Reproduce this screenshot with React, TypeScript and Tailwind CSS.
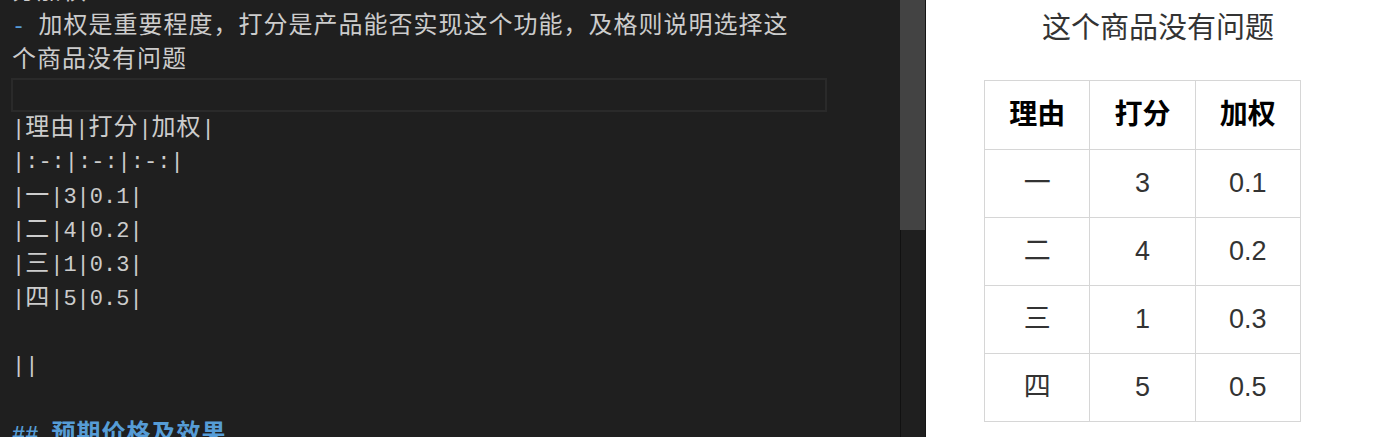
import React from "react";

const CJK = /([\u3000-\u9fff\uff00-\uffef]+)/;

function Seg({ text }: { text: string }) {
  return (
    <>
      {text.split(CJK).map((part, i) =>
        CJK.test(part) ? (
          <span key={i} className="text-[24px] leading-[34px] tracking-[1px]">
            {part}
          </span>
        ) : (
          <React.Fragment key={i}>{part}</React.Fragment>
        )
      )}
    </>
  );
}

function Line({ children, current }: { children?: React.ReactNode; current?: boolean }) {
  if (current) {
    return <div className="h-[34px] border-2 border-[#2a2a2a]" />;
  }
  return <div className="h-[34px] pl-[1px] leading-[34px] whitespace-pre overflow-hidden">{children}</div>;
}

const tableLines = ["|理由|打分|加权|", "|:-:|:-:|:-:|", "|一|3|0.1|", "|二|4|0.2|", "|三|1|0.3|", "|四|5|0.5|", "", "||", ""];

const rows = [
  ["一", "3", "0.1"],
  ["二", "4", "0.2"],
  ["三", "1", "0.3"],
  ["四", "5", "0.5"],
];

export default function App() {
  return (
    <div className="flex h-[437px] w-[1395px] overflow-hidden bg-white">
      {/* editor */}
      <div className="w-[900px] shrink-0 overflow-hidden bg-[#1f1f1f] text-[22px] text-[#cccccc] font-['Liberation_Mono','Noto_Sans_CJK_SC',monospace]">
        <div className="-mt-[24px] ml-[11px] w-[816px]">
          <Line>
            <Seg text="分加权" />
          </Line>
          <Line>
            <span className="text-[#569cd6]">-</span> <Seg text="加权是重要程度，打分是产品能否实现这个功能，及格则说明选择这" />
          </Line>
          <Line>
            <Seg text="个商品没有问题" />
          </Line>
          <Line current />
          {tableLines.map((l, i) => (
            <Line key={i}>
              <Seg text={l} />
            </Line>
          ))}
          <Line>
            <span className="font-bold text-[#569cd6]">
              ## <Seg text="预期价格及效果" />
            </span>
          </Line>
        </div>
      </div>

      {/* scrollbar */}
      <div className="flex w-[26px] shrink-0 flex-col border-r border-[#151515] bg-[#1f1f1f]">
        <div className="h-[230px] bg-[#434343]" />
        <div className="flex-1 border-l border-[#111111]" />
      </div>

      {/* preview */}
      <div className="flex-1 bg-white font-['Liberation_Sans','Noto_Sans_CJK_SC',sans-serif] text-[#333333]">
        <div className="h-[80px] pl-[116px] pt-[8px] text-[29px] leading-[40px]">这个商品没有问题</div>
        <table className="ml-[58px] w-[317px] table-fixed border-collapse text-center">
          <thead>
            <tr className="h-[69px]">
              {["理由", "打分", "加权"].map((h) => (
                <th key={h} className="border border-[#d6d6d6] text-[28px] font-bold text-black">
                  {h}
                </th>
              ))}
            </tr>
          </thead>
          <tbody>
            {rows.map((r, i) => (
              <tr key={i} className="h-[68px]">
                {r.map((c, j) => (
                  <td key={j} className="border border-[#d6d6d6] text-[27px]">
                    {c}
                  </td>
                ))}
              </tr>
            ))}
          </tbody>
        </table>
      </div>
    </div>
  );
}
